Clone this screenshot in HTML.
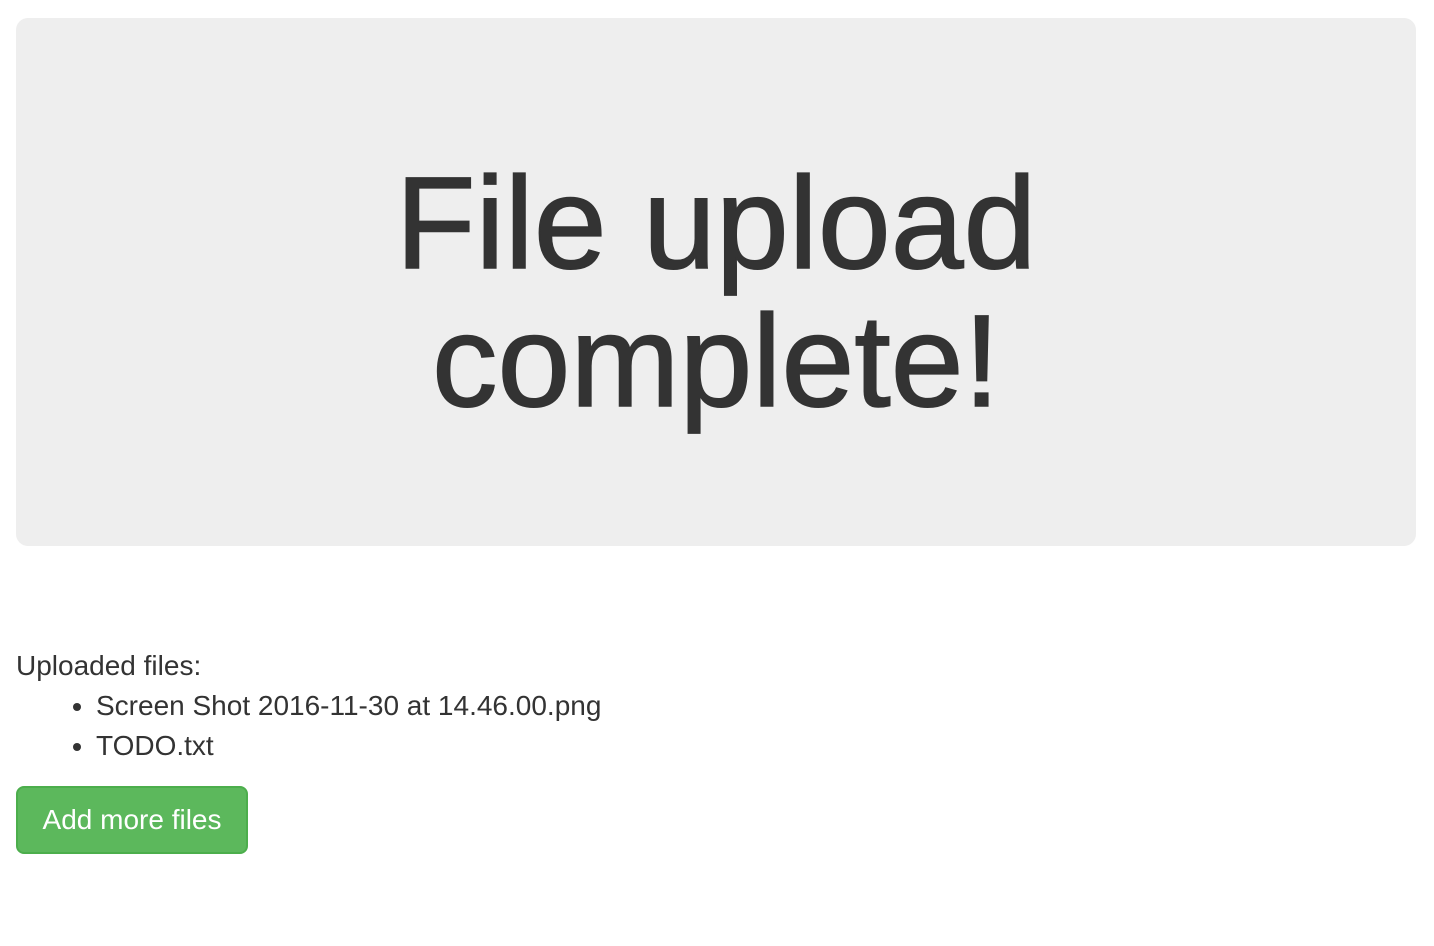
<!DOCTYPE html>
<html><head><meta charset="utf-8"><style>
body{margin:0;background:#fff;font-family:"Liberation Sans",Helvetica,Arial,sans-serif;color:#333;font-size:28px;line-height:40px}
.j{position:absolute;left:16px;top:18px;width:1400px;height:528px;background:#eee;border-radius:12px;display:flex;align-items:center;justify-content:center}
.j h1{margin:0;font-size:131px;line-height:138px;font-weight:normal;text-align:center;color:#333;width:720px;position:relative;top:10px;-webkit-text-stroke:1.5px #333}
.u{position:absolute;left:16px;top:646px}
ul{margin:0;padding-left:80px}
.b{display:inline-block;margin-top:20px;background:#5cb85c;border:2px solid #4cae4c;color:#fff;border-radius:8px;width:228px;height:64px;box-sizing:content-box;line-height:64px;text-align:center;font-size:28px}
</style></head><body>
<div class="j"><h1>File upload complete!</h1></div>
<div class="u">
<div>Uploaded files:</div>
<ul><li>Screen Shot 2016-11-30 at 14.46.00.png</li><li>TODO.txt</li></ul>
<div class="b">Add more files</div>
</div>
</body></html>
